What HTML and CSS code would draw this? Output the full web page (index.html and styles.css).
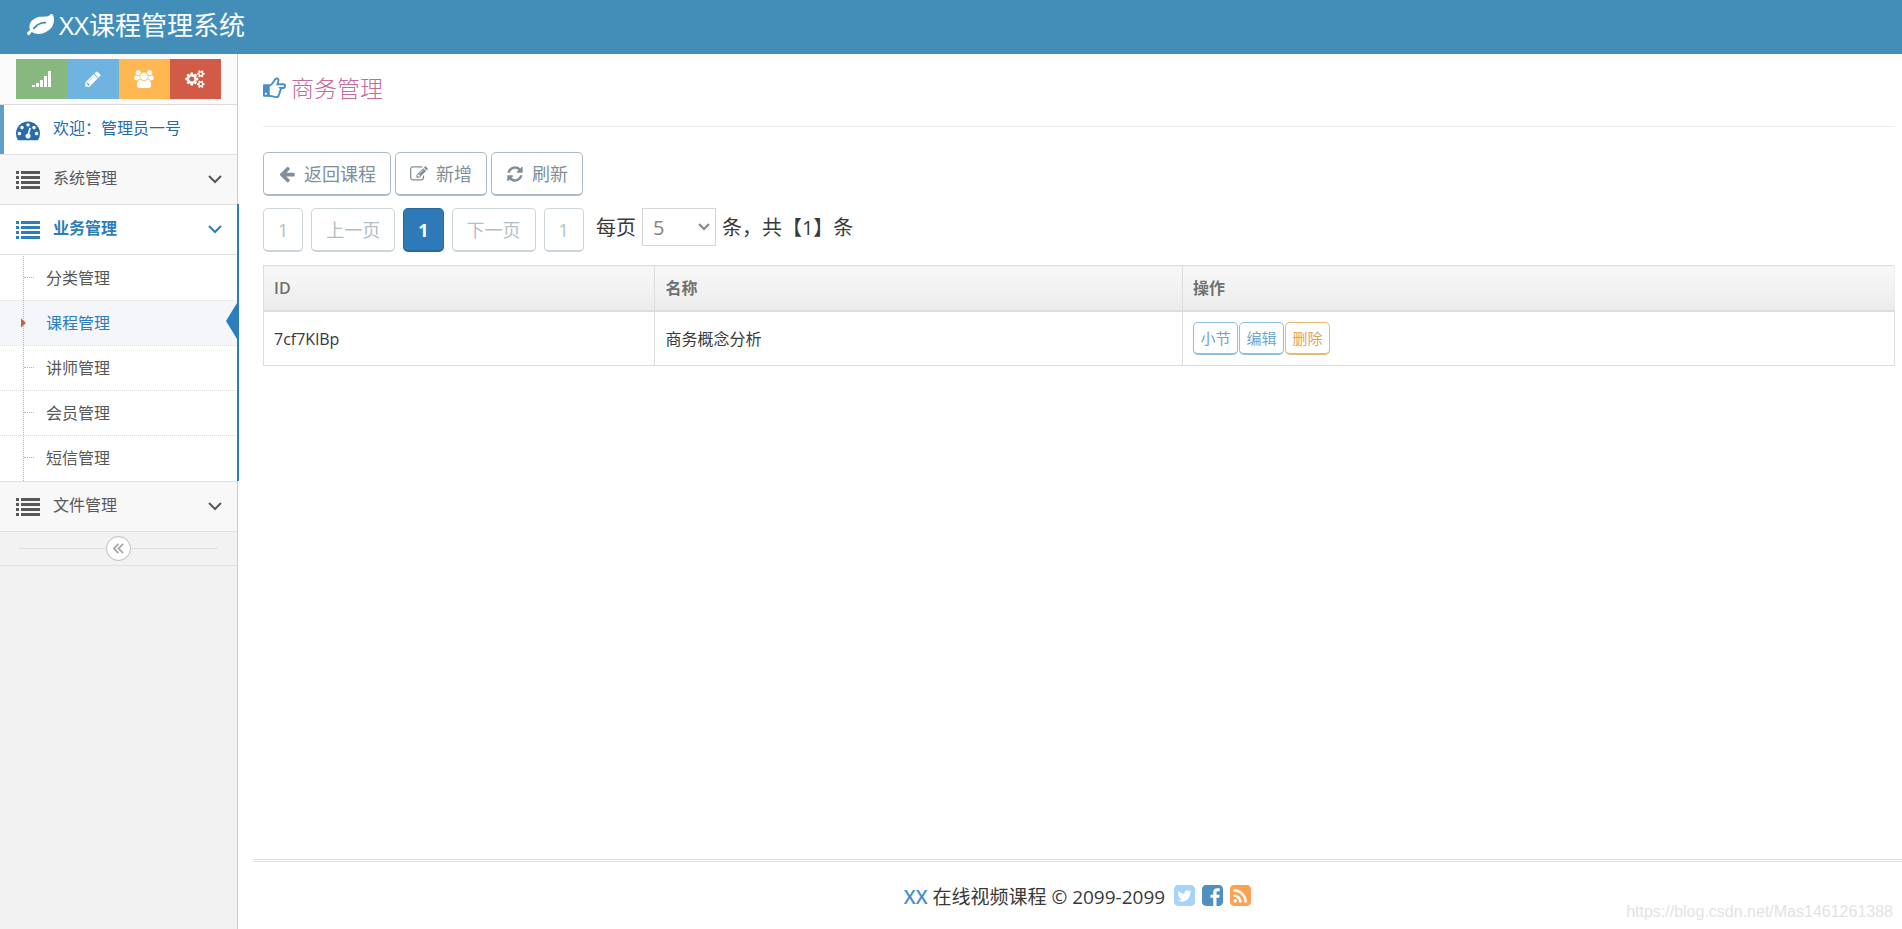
FILE: index.html
```html
<!DOCTYPE html>
<html lang="zh-CN">
<head>
<meta charset="utf-8">
<title>XX课程管理系统</title>
<link rel="stylesheet" href="styles.css">
</head>
<body>
<svg class="sprite" aria-hidden="true">
  <symbol id="list" viewBox="0 0 24 18"><path d="M0 0h3v3H0zM5 0h19v3H5zM0 5h3v3H0zM5 5h19v3H5zM0 10h3v3H0zM5 10h19v3H5zM0 15h3v3H0zM5 15h19v3H5z"/></symbol>
  <symbol id="chevron" viewBox="0 0 14 9"><path d="M1 1l6 6 6-6" fill="none" stroke="currentColor" stroke-width="2"/></symbol>
</svg>
<header class="navbar">
  <a class="brand" href="#">
    <svg class="icon-brand" viewBox="0 0 1792 1792"><path d="M1280 704q0-26-19-45t-45-19q-172 0-318 49.5t-259.5 134-235.5 219.5q-19 21-19 45 0 26 19 45t45 19q24 0 45-19 27-24 74-71t67-66q137-124 268.5-176t313.5-52q26 0 45-19t19-45zm512-198q0 95-20 193-46 224-184.5 383t-357.5 268q-214 108-438 108-148 0-286-47-15-5-88-42t-96-37q-16 0-39.5 32t-45 70-52.5 70-60 32q-43 0-63.5-17.5t-45.5-59.5q-2-4-6-11t-5.5-10-3-9.5-1.5-13.5q0-35 31-73.5t68-65.5 68-56 31-48q0-4-14-38t-16-44q-9-51-9-104 0-115 43.5-220t119-184.5 170.5-139 204-95.5q55-18 145-25.5t179.5-9 178.5-6 163.5-24 113.5-56.5l29.5-29.5 29.5-28 27-20 36.5-16 43.5-4.5q39 0 70.5 46t47.5 112 24 124 8 96z"/></svg>
    <span>XX课程管理系统</span>
  </a>
</header>
<div class="layout">
  <nav class="sidebar">
    <div class="shortcuts">
      <button class="shortcut green" type="button" aria-label="统计"><svg viewBox="0 0 20 18"><path d="M0 15h3v2H0zM4 13h3v4H4zM8 10h3v7H8zM12 6h3v11h-3zM16 1h3v16h-3z"/></svg></button>
      <button class="shortcut blue" type="button" aria-label="编辑"><svg viewBox="0 0 1792 1792"><path d="M491 1536l91-91-235-235-91 91v107h128v128h107zm523-928q0-22-22-22-10 0-17 7l-542 542q-7 7-7 17 0 22 22 22 10 0 17-7l542-542q7-7 7-17zm-54-192l416 416-832 832h-416v-416zm683 96q0 53-37 90l-166 166-416-416 166-165q36-38 90-38 53 0 91 38l235 234q37 39 37 91z"/></svg></button>
      <button class="shortcut orange" type="button" aria-label="用户"><svg viewBox="0 0 1920 1792"><path d="M593 896q-162 5-265 128h-134q-82 0-138-40.5t-56-118.5q0-353 124-353 6 0 43.5 21t97.5 42.5 119 21.5q67 0 133-23-5 37-5 66 0 139 81 256zm1071 637q0 120-73 189.5t-194 69.5h-874q-121 0-194-69.5t-73-189.5q0-53 3.5-103.5t14-109 26.5-108.5 43-97.5 62-81 85.5-53.5 111.5-20q10 0 43 21.5t73 48 107 48 135 21.5 135-21.5 107-48 73-48 43-21.5q61 0 111.5 20t85.5 53.5 62 81 43 97.5 26.5 108.5 14 109 3.5 103.5zm-1024-1277q0 106-75 181t-181 75-181-75-75-181 75-181 181-75 181 75 75 181zm704 384q0 159-112.5 271.5t-271.5 112.5-271.5-112.5-112.5-271.5 112.5-271.5 271.5-112.5 271.5 112.5 112.5 271.5zm576 225q0 78-56 118.5t-138 40.5h-134q-103-123-265-128 81-117 81-256 0-29-5-66 66 23 133 23 59 0 119-21.5t97.5-42.5 43.5-21q124 0 124 353zm-128-609q0 106-75 181t-181 75-181-75-75-181 75-181 181-75 181 75 75 181z"/></svg></button>
      <button class="shortcut red" type="button" aria-label="设置"><svg viewBox="0 0 1920 1792"><path d="M896 896q0-106-75-181t-181-75-181 75-75 181 75 181 181 75 181-75 75-181zm768 512q0-52-38-90t-90-38-90 38-38 90q0 53 37.5 90.5t90.5 37.5 90.5-37.5 37.5-90.5zm0-1024q0-52-38-90t-90-38-90 38-38 90q0 53 37.5 90.5t90.5 37.5 90.5-37.5 37.5-90.5zm-384 421v185q0 10-7 19.5t-16 10.5l-155 24q-11 35-32 76 34 48 90 115 7 11 7 20 0 12-7 19-23 30-82.5 89.5t-78.5 59.5q-11 0-21-7l-115-90q-37 19-77 31-11 108-23 155-7 24-30 24h-186q-11 0-20-7.5t-10-17.5l-23-153q-34-10-75-31l-118 89q-7 7-20 7-11 0-21-8-144-133-144-160 0-9 7-19 10-14 41-53t47-61q-23-44-35-82l-152-24q-10-1-17-9.5t-7-19.5v-185q0-10 7-19.5t16-10.5l155-24q11-35 32-76-34-48-90-115-7-11-7-20 0-12 7-20 22-30 82-89t79-59q11 0 21 7l115 90q34-18 77-32 11-108 23-154 7-24 30-24h186q11 0 20 7.5t10 17.5l23 153q34 10 75 31l118-89q8-7 20-7 11 0 21 8 144 133 144 160 0 8-7 19-12 16-42 54t-45 60q23 48 34 82l152 23q10 2 17 10.5t7 19.5zm640 533v140q0 16-149 31-12 27-30 52 51 113 51 138 0 4-4 7-122 71-124 71-8 0-46-47t-52-68q-20 2-30 2t-30-2q-14 21-52 68t-46 47q-2 0-124-71-4-3-4-7 0-25 51-138-18-25-30-52-149-15-149-31v-140q0-16 149-31 13-29 30-52-51-113-51-138 0-4 4-7 4-2 35-20t59-34 30-16q8 0 46 46.5t52 67.5q20-2 30-2t30 2q51-71 92-112l6-2q4 0 124 70 4 3 4 7 0 25-51 138 17 23 30 52 149 15 149 31zm0-1024v140q0 16-149 31-12 27-30 52 51 113 51 138 0 4-4 7-122 71-124 71-8 0-46-47t-52-68q-20 2-30 2t-30-2q-14 21-52 68t-46 47q-2 0-124-71-4-3-4-7 0-25 51-138-18-25-30-52-149-15-149-31v-140q0-16 149-31 13-29 30-52-51-113-51-138 0-4 4-7 4-2 35-20t59-34 30-16q8 0 46 46.5t52 67.5q20-2 30-2t30 2q51-71 92-112l6-2q4 0 124 70 4 3 4 7 0 25-51 138 17 23 30 52 149 15 149 31z"/></svg></button>
    </div>
    <ul class="menu">
      <li class="welcome"><a class="menu-link" href="#"><svg class="icon-menu" viewBox="0 0 1792 1792"><path d="M384 1152q0-53-37.5-90.5t-90.5-37.5-90.5 37.5-37.5 90.5 37.5 90.5 90.5 37.5 90.5-37.5 37.5-90.5zm192-448q0-53-37.5-90.5t-90.5-37.5-90.5 37.5-37.5 90.5 37.5 90.5 90.5 37.5 90.5-37.5 37.5-90.5zm428 481l101-382q6-26-7.5-48.5t-38.5-29.5-48 6.5-30 39.5l-101 382q-60 5-107 43.5t-63 98.5q-20 77 20 146t117 89 146-20 89-117q16-60-6-117t-72-91zm660-33q0-53-37.5-90.5t-90.5-37.5-90.5 37.5-37.5 90.5 37.5 90.5 90.5 37.5 90.5-37.5 37.5-90.5zm-640-640q0-53-37.5-90.5t-90.5-37.5-90.5 37.5-37.5 90.5 37.5 90.5 90.5 37.5 90.5-37.5 37.5-90.5zm448 192q0-53-37.5-90.5t-90.5-37.5-90.5 37.5-37.5 90.5 37.5 90.5 90.5 37.5 90.5-37.5 37.5-90.5zm320 448q0 261-141 483-19 29-54 29h-1402q-35 0-54-29-141-221-141-483 0-182 71-348t191-286 286-191 348-71 348 71 286 191 191 286 71 348z"/></svg><span class="label">欢迎：管理员一号</span></a></li>
      <li><a class="menu-link" href="#"><svg class="icon-menu"><use href="#list"/></svg><span class="label">系统管理</span><svg class="icon-chevron"><use href="#chevron"/></svg></a></li>
      <li class="open"><a class="menu-link" href="#"><svg class="icon-menu"><use href="#list"/></svg><span class="label">业务管理</span><svg class="icon-chevron"><use href="#chevron"/></svg></a>
        <ul class="submenu">
          <li><a href="#">分类管理</a></li>
          <li class="active"><a href="#">课程管理</a></li>
          <li><a href="#">讲师管理</a></li>
          <li><a href="#">会员管理</a></li>
          <li><a href="#">短信管理</a></li>
        </ul>
      </li>
      <li><a class="menu-link" href="#"><svg class="icon-menu"><use href="#list"/></svg><span class="label">文件管理</span><svg class="icon-chevron"><use href="#chevron"/></svg></a></li>
    </ul>
    <div class="collapse">
      <button type="button" aria-label="收起菜单"><svg viewBox="0 0 12 12"><path d="M6 1L1 6l5 5M11 1L6 6l5 5"/></svg></button>
    </div>
  </nav>
  <main class="main">
    <section class="content">
      <h1 class="page-title">
        <svg class="icon-hand" viewBox="0 0 24 22"><path d="M6 8.500c2.500 0 4.500-3 5.500-4.500 1-1.500 1-3 2.500-3 2 0 2.500 1.500 2 3L15 7h6c1.500 0 2 1 2 2s-.5 2-2 2h-3c1 1.500.5 3-.5 3.500.5 1.500 0 2.500-1 3.500 0 2-1 2.500-3 2.500-2.500 0-4.500-1.500-7.500-1.500"/><path class="cuff" fill-rule="evenodd" d="M1 7h5q1 0 1 1v11q0 1-1 1H1q-1 0-1-1V8q0-1 1-1zM2 16v2h2v-2z"/></svg>
        <span>商务管理</span>
      </h1>
      <div class="toolbar">
        <button class="btn" type="button"><svg viewBox="0 0 1792 1792"><path d="M1664 896v128q0 53-32.500 90.500t-84.500 37.500h-704l293 294q38 36 38 90t-38 90l-75 76q-37 37-90 37-52 0-91-37l-651-652q-37-37-37-90 0-52 37-91l651-650q38-38 91-38 52 0 90 38l75 74q38 38 38 91t-38 91l-293 293h704q52 0 84.500 37.500t32.500 90.500z"/></svg>返回课程</button>
        <button class="btn" type="button"><svg viewBox="0 0 1792 1792"><path d="M888 1184l116-116-152-152-116 116v56h96v96h56zm440-720q-16-16-33 1l-350 350q-17 17-1 33t33-1l350-350q17-17 1-33zm80 594v190q0 119-84.500 203.500t-203.500 84.500h-832q-119 0-203.500-84.500t-84.500-203.500v-832q0-119 84.500-203.500t203.500-84.500h832q63 0 117 25 15 7 18 23 3 17-9 29l-49 49q-14 14-32 8-23-6-45-6h-832q-66 0-113 47t-47 113v832q0 66 47 113t113 47h832q66 0 113-47t47-113v-126q0-13 9-22l64-64q15-15 35-7t20 29zm-96-738l288 288-672 672h-288v-288zm444 132l-92 92-288-288 92-92q28-28 68-28t68 28l152 152q28 28 28 68t-28 68z"/></svg>新增</button>
        <button class="btn" type="button"><svg viewBox="0 0 1792 1792"><path d="M1639 1056q0 5-1 7-64 268-268 434.500t-478 166.500q-146 0-282.500-55t-243.500-157l-129 129q-19 19-45 19t-45-19-19-45v-448q0-26 19-45t45-19h448q26 0 45 19t19 45-19 45l-137 137q71 66 161 102t187 36q134 0 250-65t186-179q11-17 53-117 8-23 30-23h192q13 0 22.500 9.500t9.500 22.500zm25-800v448q0 26-19 45t-45 19h-448q-26 0-45-19t-19-45 19-45l138-138q-148-137-349-137-134 0-250 65t-186 179q-11 17-53 117-8 23-30 23h-199q-13 0-22.500-9.500t-9.500-22.500v-7q65-268 270-434.500t480-166.500q146 0 284 55.500t245 156.500l130-129q19-19 45-19t45 19 19 45z"/></svg>刷新</button>
      </div>
      <div class="pagination">
        <button class="btn" type="button" disabled>1</button>
        <button class="btn" type="button" disabled>上一页</button>
        <button class="btn current" type="button">1</button>
        <button class="btn" type="button" disabled>下一页</button>
        <button class="btn" type="button" disabled>1</button>
        <div class="page-size">
          <label for="size">每页</label>
          <div class="select-box">
            <select id="size"><option>5</option><option>10</option><option>20</option></select>
            <svg viewBox="0 0 14 9"><path d="M2 1l5 5 5-5"/></svg>
          </div>
          <span>条，共【1】条</span>
        </div>
      </div>
      <table class="grid">
        <colgroup><col class="col-id"><col class="col-name"><col></colgroup>
        <thead><tr><th>ID</th><th>名称</th><th>操作</th></tr></thead>
        <tbody><tr>
          <td>7cf7KlBp</td>
          <td>商务概念分析</td>
          <td><div class="actions"><button class="mini" type="button">小节</button><button class="mini" type="button">编辑</button><button class="mini warn" type="button">删除</button></div></td>
        </tr></tbody>
      </table>
    </section>
    <footer class="footer">
      <span class="copyright"><b>XX</b> 在线视频课程 © 2099-2099</span>
      <a class="tw" href="#" aria-label="Twitter"><svg viewBox="128 128 1536 1536"><path d="M1408 610q-56 25-121 34 68-40 93-117-65 38-134 51-61-66-153-66-87 0-148.500 61.500t-61.500 148.500q0 29 5 48-129-7-242-65t-192-155q-29 50-29 106 0 114 91 175-47-1-100-26v2q0 75 50 133.500t123 72.500q-29 8-51 8-13 0-39-4 21 63 74.500 104t121.500 42q-116 90-261 90-26 0-50-3 148 94 322 94 112 0 210-35.500t168-95 120.500-137 75-162 24.500-168.500q0-18-1-27 63-45 105-109zm256-194v960q0 119-84.500 203.500t-203.500 84.500h-960q-119 0-203.500-84.500t-84.500-203.500v-960q0-119 84.500-203.500t203.500-84.500h960q119 0 203.500 84.500t84.500 203.500z"/></svg></a>
      <a class="fb" href="#" aria-label="Facebook"><svg viewBox="128 128 1536 1536"><path d="M1376 128q119 0 203.500 84.500t84.500 203.500v960q0 119-84.500 203.500t-203.500 84.500h-188v-595h199l30-232h-229v-148q0-56 23.500-84t91.500-28l122-1v-207q-63-9-178-9-136 0-217.500 80t-81.500 226v171h-200v232h200v595h-532q-119 0-203.500-84.500t-84.500-203.500v-960q0-119 84.500-203.500t203.500-84.500h960z"/></svg></a>
      <a class="rss" href="#" aria-label="RSS"><svg viewBox="128 128 1536 1536"><path d="M640 1280q0-53-37.500-90.500t-90.500-37.500-90.500 37.500-37.500 90.500 37.500 90.500 90.500 37.500 90.500-37.500 37.500-90.500zm351 94q-13-232-177-396t-396-177q-14-1-24 9t-10 23v128q0 13 8.500 22t21.500 10q154 11 264 121t121 264q1 13 10 21.500t22 8.500h128q13 0 23-10t9-24zm384 1q-5-154-56-297.500t-139.500-260-205-205-260-139.500-297.500-56q-14-1-23 9-10 10-10 23v128q0 13 9 22t22 10q204 7 378 111.500t278.500 278.500 111.500 378q1 13 10 22t22 9h128q13 0 23-10 11-9 9-23zm289-959v960q0 119-84.500 203.500t-203.500 84.500h-960q-119 0-203.500-84.500t-84.500-203.500v-960q0-119 84.500-203.500t203.500-84.500h960q119 0 203.500 84.500t84.500 203.500z"/></svg></a>
    </footer>
  </main>
</div>
<div class="watermark">https://blog.csdn.net/Mas1461261388</div>
</body>
</html>
```
FILE: styles.css
```css
* { box-sizing: border-box; }
body {
  margin: 0;
  min-height: 100vh;
  display: flex;
  flex-direction: column;
  font: 16px/24px "Open Sans", "Noto Sans CJK SC", sans-serif;
  color: #393939;
  background: #fff;
}
svg { display: block; fill: currentColor; flex: none; }
a { color: inherit; text-decoration: none; }
ul { list-style: none; margin: 0; padding: 0; }
button, select { font: inherit; color: inherit; margin: 0; }
.sprite { position: absolute; width: 0; height: 0; }

.navbar { height: 54px; background: #438eb9; color: #fff; padding: 0 27px; display: flex; }
.brand { display: flex; align-items: center; gap: 5px; font-size: 26px; line-height: 50px; padding-bottom: 4px; }
.icon-brand { width: 27px; height: 27px; }

.layout { flex: 1; display: flex; }
.sidebar { width: 238px; flex: none; background: #f2f2f2; border-right: 1px solid #ccc; }
.shortcuts { display: flex; background: #fafafa; padding: 5px 16px; height: 51px; border-bottom: 1px solid #ddd; }
.shortcut { flex: 1; border: 0; padding: 0; color: #fff; display: flex; align-items: center; justify-content: center; }
.shortcut svg { width: 20px; height: 18px; }
.green { background: #87b87f; }
.blue { background: #6fb3e0; }
.orange { background: #ffb752; }
.red { background: #d15b47; }

.menu > li { background: #f8f8f8; border-bottom: 1px solid #e0e0e0; color: #585858; }
.menu-link { display: flex; align-items: center; height: 49px; padding: 0 15px 0 16px; }
.icon-menu { width: 24px; height: 24px; }
li:not(.welcome) > .menu-link .icon-menu { height: 18px; }
.label { flex: 1; padding: 0 0 3px 13px; }
.icon-chevron { width: 14px; height: 9px; }
.menu > .welcome { background: #fff; color: #266cad; }
.welcome .menu-link { border-left: 4px solid #629cc9; padding-left: 12px; }
.menu > .open { background: #fff; position: relative; }
.open > .menu-link { color: #2b7dbc; font-weight: 700; border-bottom: 1px solid #e0e0e0; height: 50px; }
.open::after { content: ""; position: absolute; top: -1px; right: -2px; bottom: 0; width: 2px; background: #2b7dbc; }

.submenu { position: relative; padding-bottom: 1px; }
.submenu::before { content: ""; position: absolute; z-index: 1; left: 23px; top: 1px; bottom: 0; border-left: 1px dotted #9dbdd6; }
.submenu li { position: relative; border-top: 1px dotted #e0e0e0; }
.submenu li:first-child { border-top-color: #fff; }
.submenu a { display: block; line-height: 24px; padding: 10px 0 10px 46px; }
.submenu a::before { content: ""; position: absolute; left: 24px; top: 21px; width: 10px; border-top: 1px dotted #9dbdd6; }
.submenu .active { background: #f4f6fa; color: #2b7dbc; }
.submenu .active a::before { z-index: 2; left: 21px; top: 14px; width: 5px; height: 16px; background: #c86139; clip-path: polygon(0 22%, 100% 50%, 0 78%); border: 0; }
.submenu .active::after { content: ""; position: absolute; right: 0; top: 2px; width: 11px; height: 36px; background: #2b7dbc; clip-path: polygon(0 50%, 100% 0, 100% 100%); }

.collapse { height: 34px; border-bottom: 1px solid #e0e0e0; display: flex; align-items: center; padding: 0 19px; }
.collapse::before, .collapse::after { content: ""; flex: 1; border-top: 1px solid #e0e0e0; }
.collapse button { width: 25px; height: 25px; border: 1px solid #bbb; border-radius: 50%; background: #fff; color: #aaa; padding: 0; display: flex; align-items: center; justify-content: center; }
.collapse svg { width: 11px; height: 11px; }
.collapse path { fill: none; stroke: currentColor; stroke-width: 2; }

.main { flex: 1; min-width: 0; display: flex; flex-direction: column; }
.content { flex: 1; padding: 17px 7px 0 25px; }
.page-title { margin: 0 0 25px; height: 56px; border-bottom: 1px solid #eee; display: flex; align-items: flex-start; gap: 5px; color: #c6699f; font-size: 23px; line-height: 34px; font-weight: 300; }
.icon-hand { width: 23px; height: 34px; color: #478fca; fill: none; stroke: currentColor; stroke-width: 2; }
.icon-hand .cuff { fill: currentColor; stroke: none; }

.toolbar { display: flex; gap: 4px; margin-bottom: 12px; }
.btn { height: 44px; padding: 0 14px; border: 1px solid #abbac3; border-bottom-width: 2px; border-radius: 5px; background: #fff; color: #80909a; font-size: 18px; display: flex; align-items: center; gap: 8px; }
.btn svg { width: 18px; height: 18px; }
.btn:disabled { border-color: #ccd5da; color: #b3bdc3; }
.btn.current { background: #2e7ab8; border-color: #27689d; color: #fff; font-weight: 700; }
.pagination { display: flex; gap: 8px; margin-bottom: 13px; }
.page-size { display: flex; align-items: center; height: 38px; gap: 6px; margin-left: 4px; font-size: 20px; }
.page-size label, .page-size span { padding-top: 2px; }
.select-box { position: relative; }
select { appearance: none; display: block; width: 74px; height: 38px; padding: 2px 10px 0; border: 1px solid #d5d5d5; border-radius: 0; background: #fff; color: #858585; }
.select-box svg { position: absolute; right: 5px; top: 15px; width: 14px; height: 9px; fill: none; stroke: #858585; stroke-width: 2; pointer-events: none; }

.grid { width: 100%; border-collapse: collapse; table-layout: fixed; }
.col-id { width: 24%; }
.col-name { width: 32.35%; }
.grid th, .grid td { border: 1px solid #ddd; text-align: left; padding: 10px; }
.grid th { color: #707070; background: linear-gradient(#f8f8f8, #ececec); border-bottom-width: 2px; font-weight: 600; }
.grid th:last-child { border-right-color: #eee; }
.actions { display: flex; gap: 1px; }
.mini { width: 45px; height: 33px; padding: 0; font-size: 15px; background: #fff; color: #6fa3c8; border: 1px solid #8ebfdd; border-bottom-width: 2px; border-radius: 5px; }
.mini.warn { color: #daa458; border-color: #e8b878; }

.footer { margin-left: 15px; height: 70px; border-top: 3px double #e5e5e5; display: flex; align-items: center; justify-content: center; gap: 7px; font-size: 19px; }
.copyright { margin-right: 2px; padding-top: 2px; }
.footer b { color: #478fca; font-weight: 600; }
.footer svg { width: 21px; height: 21px; }
.tw { color: #a6d4fa; }
.fb { color: #5090c1; }
.rss { color: #ff9f50; }
.watermark { position: absolute; right: 9px; bottom: 6px; font: 16px/22px "Liberation Sans", Arial, sans-serif; color: #e3e3e3; }
```
